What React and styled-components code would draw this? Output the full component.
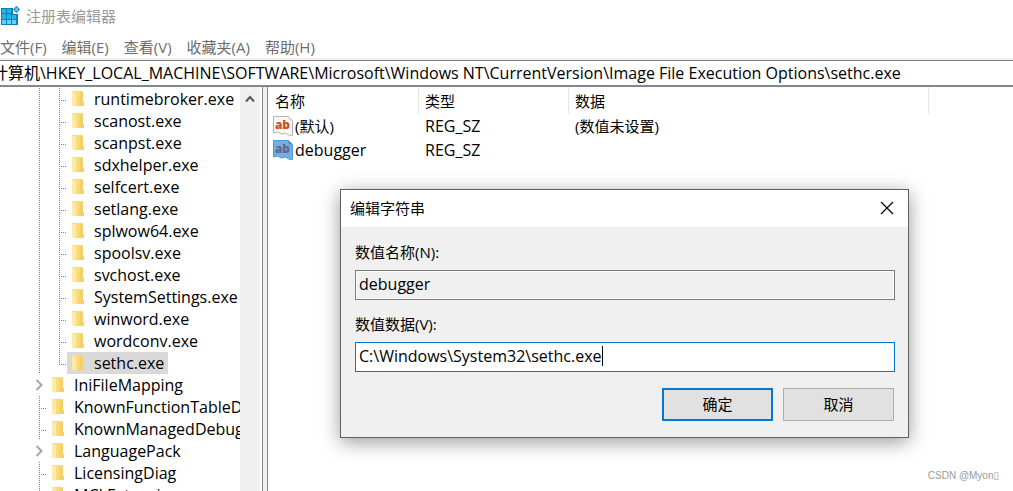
import React from 'react';
import styled, { createGlobalStyle, css } from 'styled-components';

const GlobalStyle = createGlobalStyle`
  * {
    box-sizing: border-box;
  }

  body {
    margin: 0;
    background: #fff;
    color: #000;
    overflow: hidden;
  }

  body,
  button,
  input {
    font-family: 'Open Sans', 'Noto Sans CJK SC', sans-serif;
    font-size: 15px;
    line-height: 22px;
  }
`;

const Window = styled.div`
  display: flex;
  flex-direction: column;
  height: 100vh;
  white-space: nowrap;
`;

const TitleBar = styled.header`
  display: flex;
  align-items: center;
  gap: 5px;
  height: 34px;
  padding-bottom: 3px;
  color: #999;
`;

const MenuBar = styled.nav`
  display: flex;
  gap: 15px;
  height: 26px;
  padding-top: 2px;
  border-bottom: 2px solid #f0f0f0;
`;

const MenuItem = styled.button`
  height: 22px;
  padding: 0;
  border: 0;
  background: none;
  color: #6d6d6d;
`;

const AddressBar = styled.input`
  flex: none;
  width: 100%;
  height: 27px;
  padding: 0 0 2px;
  border: 0;
  border-top: 1px solid #7a7a7a;
  border-bottom: 2px solid #828790;
  outline: 0;
  font-size: 16px;
  text-indent: -8px;
`;

const Panes = styled.div`
  display: flex;
  flex: 1;
  min-height: 0;
  background: #f0f0f0;
`;

const TreePane = styled.div`
  display: flex;
  width: 263px;
  padding-right: 2px;
  border-right: 1px solid #828790;
  background: #fff;
`;

const Tree = styled.ul`
  flex: 1;
  margin: 0;
  padding: 1px 0 0;
  font-size: 16px;
  list-style: none;
  overflow: hidden;
`;

const TreeRow = styled.li`
  display: flex;
  height: 22px;
  padding-left: ${(p) => (p.$expandable ? 35 : 39)}px;
`;

const dots = (dir) =>
  `repeating-linear-gradient(to ${dir}, #808080 0 1px, transparent 1px 2px)`;

const Guide = styled.span`
  flex: none;
  width: 20px;
  background: ${dots('bottom')} 0 0 / 1px 100% no-repeat;
`;

const Branch = styled.span`
  flex: none;
  width: 8px;
  background:
    ${dots('bottom')} 0 0 / 1px ${(p) => (p.$last ? '12px' : '100%')} no-repeat,
    ${dots('right')} 0 12px / 8px 1px no-repeat;
`;

const Expander = styled.button`
  display: flex;
  align-items: center;
  flex: none;
  width: 12px;
  padding: 0;
  border: 0;
  background: none;
`;

const Label = styled.span`
  display: flex;
  align-items: center;
  gap: 10px;
  padding: 0 4px 0 5px;
  ${(p) =>
    p.$selected &&
    css`
      background: #d9d9d9;
    `}
  svg {
    flex: none;
  }
`;

const ScrollBar = styled.div`
  flex: none;
  width: 20px;
  background: #f0f0f0;
`;

const ScrollButton = styled.button`
  display: flex;
  align-items: center;
  justify-content: center;
  width: 19px;
  height: 24px;
  padding: 0;
  border: 0;
  background: none;
`;

const ListPane = styled.main`
  flex: 1;
  margin-left: 4px;
  border-left: 1px solid #828790;
  background: #fff;
  overflow: hidden;
`;

const ValueTable = styled.table`
  width: 100%;
  table-layout: fixed;
  border-collapse: separate;
  border-spacing: 0;

  th,
  td {
    height: 24px;
    padding: 0 0 0 6px;
    text-align: left;
    font-weight: 400;
  }

  th {
    height: 27px;
    border-right: 1px solid #e5e5e5;
  }

  th:first-child {
    padding-left: 7px;
  }

  th:last-child {
    border-right: 0;
  }

  td:first-child {
    padding-left: 5px;
  }

  td:lang(en) {
    font-size: 16px;
  }
`;

const ValueName = styled.span`
  display: flex;
  align-items: center;
  gap: 2px;
`;

const Dialog = styled.section`
  position: absolute;
  top: 189px;
  left: 340px;
  width: 569px;
  border: 1px solid #606060;
  background: #f0f0f0;
  box-shadow: 0 4px 18px rgba(0, 0, 0, 0.4);
`;

const DialogTitle = styled.div`
  display: flex;
  align-items: center;
  justify-content: space-between;
  height: 37px;
  padding: 0 14px 2px 9px;
  background: #fff;

  h1 {
    margin: 0;
    font-size: 15px;
    font-weight: 400;
  }
`;

const CloseButton = styled.button`
  display: flex;
  padding: 0;
  border: 0;
  background: none;
`;

const DialogForm = styled.form`
  display: flex;
  flex-direction: column;
  padding: 14px 13px 16px 14px;
`;

const FieldLabel = styled.label`
  margin-bottom: 7px;
`;

const Field = styled.input`
  width: 100%;
  height: 30px;
  margin-bottom: 13px;
  padding: 0 3px 3px;
  border: 1px solid #0078d7;
  outline: 0;
  background: linear-gradient(#000, #000) 246px 3px / 1px 20px no-repeat #fff;
  font-size: 16px;
  caret-color: transparent;

  &:read-only {
    border-color: #7a7a7a;
    background: #f0f0f0;
    box-shadow: inset 0 0 0 1px #fff;
  }
`;

const Actions = styled.div`
  display: flex;
  justify-content: flex-end;
  gap: 10px;
  padding: 3px 1px 0 0;
`;

const ActionButton = styled.button`
  width: 111px;
  height: 33px;
  padding: 0 0 2px;
  border: ${(p) => (p.$primary ? '2px solid #0078d7' : '1px solid #adadad')};
  background: #e1e1e1;
`;

const Watermark = styled.span`
  position: absolute;
  right: 14px;
  bottom: 7px;
  color: #999;
  font: 10px/16px 'Liberation Sans', 'DejaVu Sans', sans-serif;
`;

function RegeditIcon() {
  return (
    <svg width="21" height="20" viewBox="0 0 21 20" aria-hidden="true">
      <path d="M1 2h12v6h5v11H1z" fill="#0f7fb5" />
      <g fill="#22b4ec">
        <path d="M2 3h4v4H2zM7 3h4v4H7zM2 8h4v5H2zM7 8h4v5H7zM12 9h4v4h-4z" />
        <path d="M2 14h4v4H2zM7 14h4v4H7zM12 14h4v4h-4z" fill="#62d3f8" />
      </g>
      <path d="M16.500 0l3.500 3.500-3.500 3.500-3.500-3.500z" fill="#1583b8" />
      <path d="M16.500 1.500l2 2-2 2-2-2z" fill="#6fcdf0" />
    </svg>
  );
}

function FolderIcon() {
  return (
    <svg width="12" height="16" viewBox="0 0 12 16" aria-hidden="true">
      <path d="M0 0h11v11h1v4H2L0 14z" fill="#f9da7c" />
      <path d="M8 1h3v10h1v4H7z" fill="#f5cf68" />
      <path d="M0 0l4 2v14l-4-2z" fill="#ffe9a8" />
    </svg>
  );
}

function StringIcon({ selected }) {
  return (
    <svg width="20" height="20" viewBox="0 0 20 20" aria-hidden="true">
      <path
        d="M.5.500h15l4 4v15l-4-.500-3-2-4 1-4-2-4 1z"
        fill={selected ? '#6fb1e4' : '#f8f8f8'}
        stroke={selected ? '#4f9bd8' : '#b4b4b4'}
      />
      <path d="M15.500.500v4h4z" fill={selected ? '#4a92ca' : '#ddd'} />
      <text
        x="9.500"
        y="13"
        textAnchor="middle"
        fontFamily="Open Sans"
        fontSize="12"
        fontWeight="800"
        fill={selected ? '#6a6394' : '#dc4b28'}
      >
        ab
      </text>
    </svg>
  );
}

function Chevron() {
  return (
    <svg width="8" height="12" viewBox="0 0 8 12" aria-hidden="true">
      <path d="M1.500 1l5 5-5 5" fill="none" stroke="#a6a6a6" strokeWidth="2" />
    </svg>
  );
}

const menus = ['文件(F)', '编辑(E)', '查看(V)', '收藏夹(A)', '帮助(H)'];

const programs = [
  'runtimebroker.exe',
  'scanost.exe',
  'scanpst.exe',
  'sdxhelper.exe',
  'selfcert.exe',
  'setlang.exe',
  'splwow64.exe',
  'spoolsv.exe',
  'svchost.exe',
  'SystemSettings.exe',
  'winword.exe',
  'wordconv.exe',
  'sethc.exe',
];

const keys = [
  { name: 'IniFileMapping', expandable: true },
  { name: 'KnownFunctionTableDlls' },
  { name: 'KnownManagedDebuggingDlls' },
  { name: 'LanguagePack', expandable: true },
  { name: 'LicensingDiag' },
  { name: 'MCI Extensions' },
];

const values = [
  { name: '(默认)', type: 'REG_SZ', data: '(数值未设置)', lang: 'zh' },
  { name: 'debugger', type: 'REG_SZ', data: '', lang: 'en', selected: true },
];

function App() {
  return (
    <Window>
      <GlobalStyle />
      <TitleBar>
        <RegeditIcon />
        注册表编辑器
      </TitleBar>
      <MenuBar>
        {menus.map((menu) => (
          <MenuItem key={menu} type="button">
            {menu}
          </MenuItem>
        ))}
      </MenuBar>
      <AddressBar
        aria-label="地址"
        defaultValue="计算机\HKEY_LOCAL_MACHINE\SOFTWARE\Microsoft\Windows NT\CurrentVersion\Image File Execution Options\sethc.exe"
      />
      <Panes>
        <TreePane>
          <Tree>
            {programs.map((name, i) => (
              <TreeRow key={name}>
                <Guide />
                <Branch $last={i === programs.length - 1} />
                <Label $selected={name === 'sethc.exe'}>
                  <FolderIcon />
                  {name}
                </Label>
              </TreeRow>
            ))}
            {keys.map(({ name, expandable }) => (
              <TreeRow key={name} $expandable={expandable}>
                {expandable ? (
                  <Expander type="button" aria-label={name}>
                    <Chevron />
                  </Expander>
                ) : (
                  <Branch />
                )}
                <Label>
                  <FolderIcon />
                  {name}
                </Label>
              </TreeRow>
            ))}
          </Tree>
          <ScrollBar>
            <ScrollButton type="button" aria-label="向上滚动">
              <svg width="10" height="8" viewBox="0 0 10 8">
                <path d="M1 6.500l4-4.500 4 4.500" fill="none" stroke="#555" strokeWidth="2" />
              </svg>
            </ScrollButton>
          </ScrollBar>
        </TreePane>
        <ListPane>
          <ValueTable>
            <colgroup>
              <col width="151" />
              <col width="150" />
              <col width="360" />
              <col />
            </colgroup>
            <thead>
              <tr>
                <th>名称</th>
                <th>类型</th>
                <th>数据</th>
                <th aria-hidden="true" />
              </tr>
            </thead>
            <tbody>
              {values.map(({ name, type, data, lang, selected }) => (
                <tr key={name}>
                  <td lang={lang}>
                    <ValueName>
                      <StringIcon selected={selected} />
                      {name}
                    </ValueName>
                  </td>
                  <td lang="en">{type}</td>
                  <td>{data}</td>
                  <td />
                </tr>
              ))}
            </tbody>
          </ValueTable>
        </ListPane>
      </Panes>
      <Dialog role="dialog" aria-labelledby="dialog-title">
        <DialogTitle>
          <h1 id="dialog-title">编辑字符串</h1>
          <CloseButton type="button" aria-label="关闭">
            <svg width="14" height="14" viewBox="0 0 14 14">
              <path d="M1 1l12 12M13 1L1 13" stroke="#000" strokeWidth="1.200" />
            </svg>
          </CloseButton>
        </DialogTitle>
        <DialogForm onSubmit={(e) => e.preventDefault()}>
          <FieldLabel htmlFor="value-name">数值名称(N):</FieldLabel>
          <Field id="value-name" value="debugger" readOnly />
          <FieldLabel htmlFor="value-data">数值数据(V):</FieldLabel>
          <Field
            id="value-data"
            defaultValue="C:\Windows\System32\sethc.exe"
            autoFocus
          />
          <Actions>
            <ActionButton $primary type="submit">
              确定
            </ActionButton>
            <ActionButton type="button">取消</ActionButton>
          </Actions>
        </DialogForm>
      </Dialog>
      <Watermark>CSDN @Myon▯</Watermark>
    </Window>
  );
}

export default App;
